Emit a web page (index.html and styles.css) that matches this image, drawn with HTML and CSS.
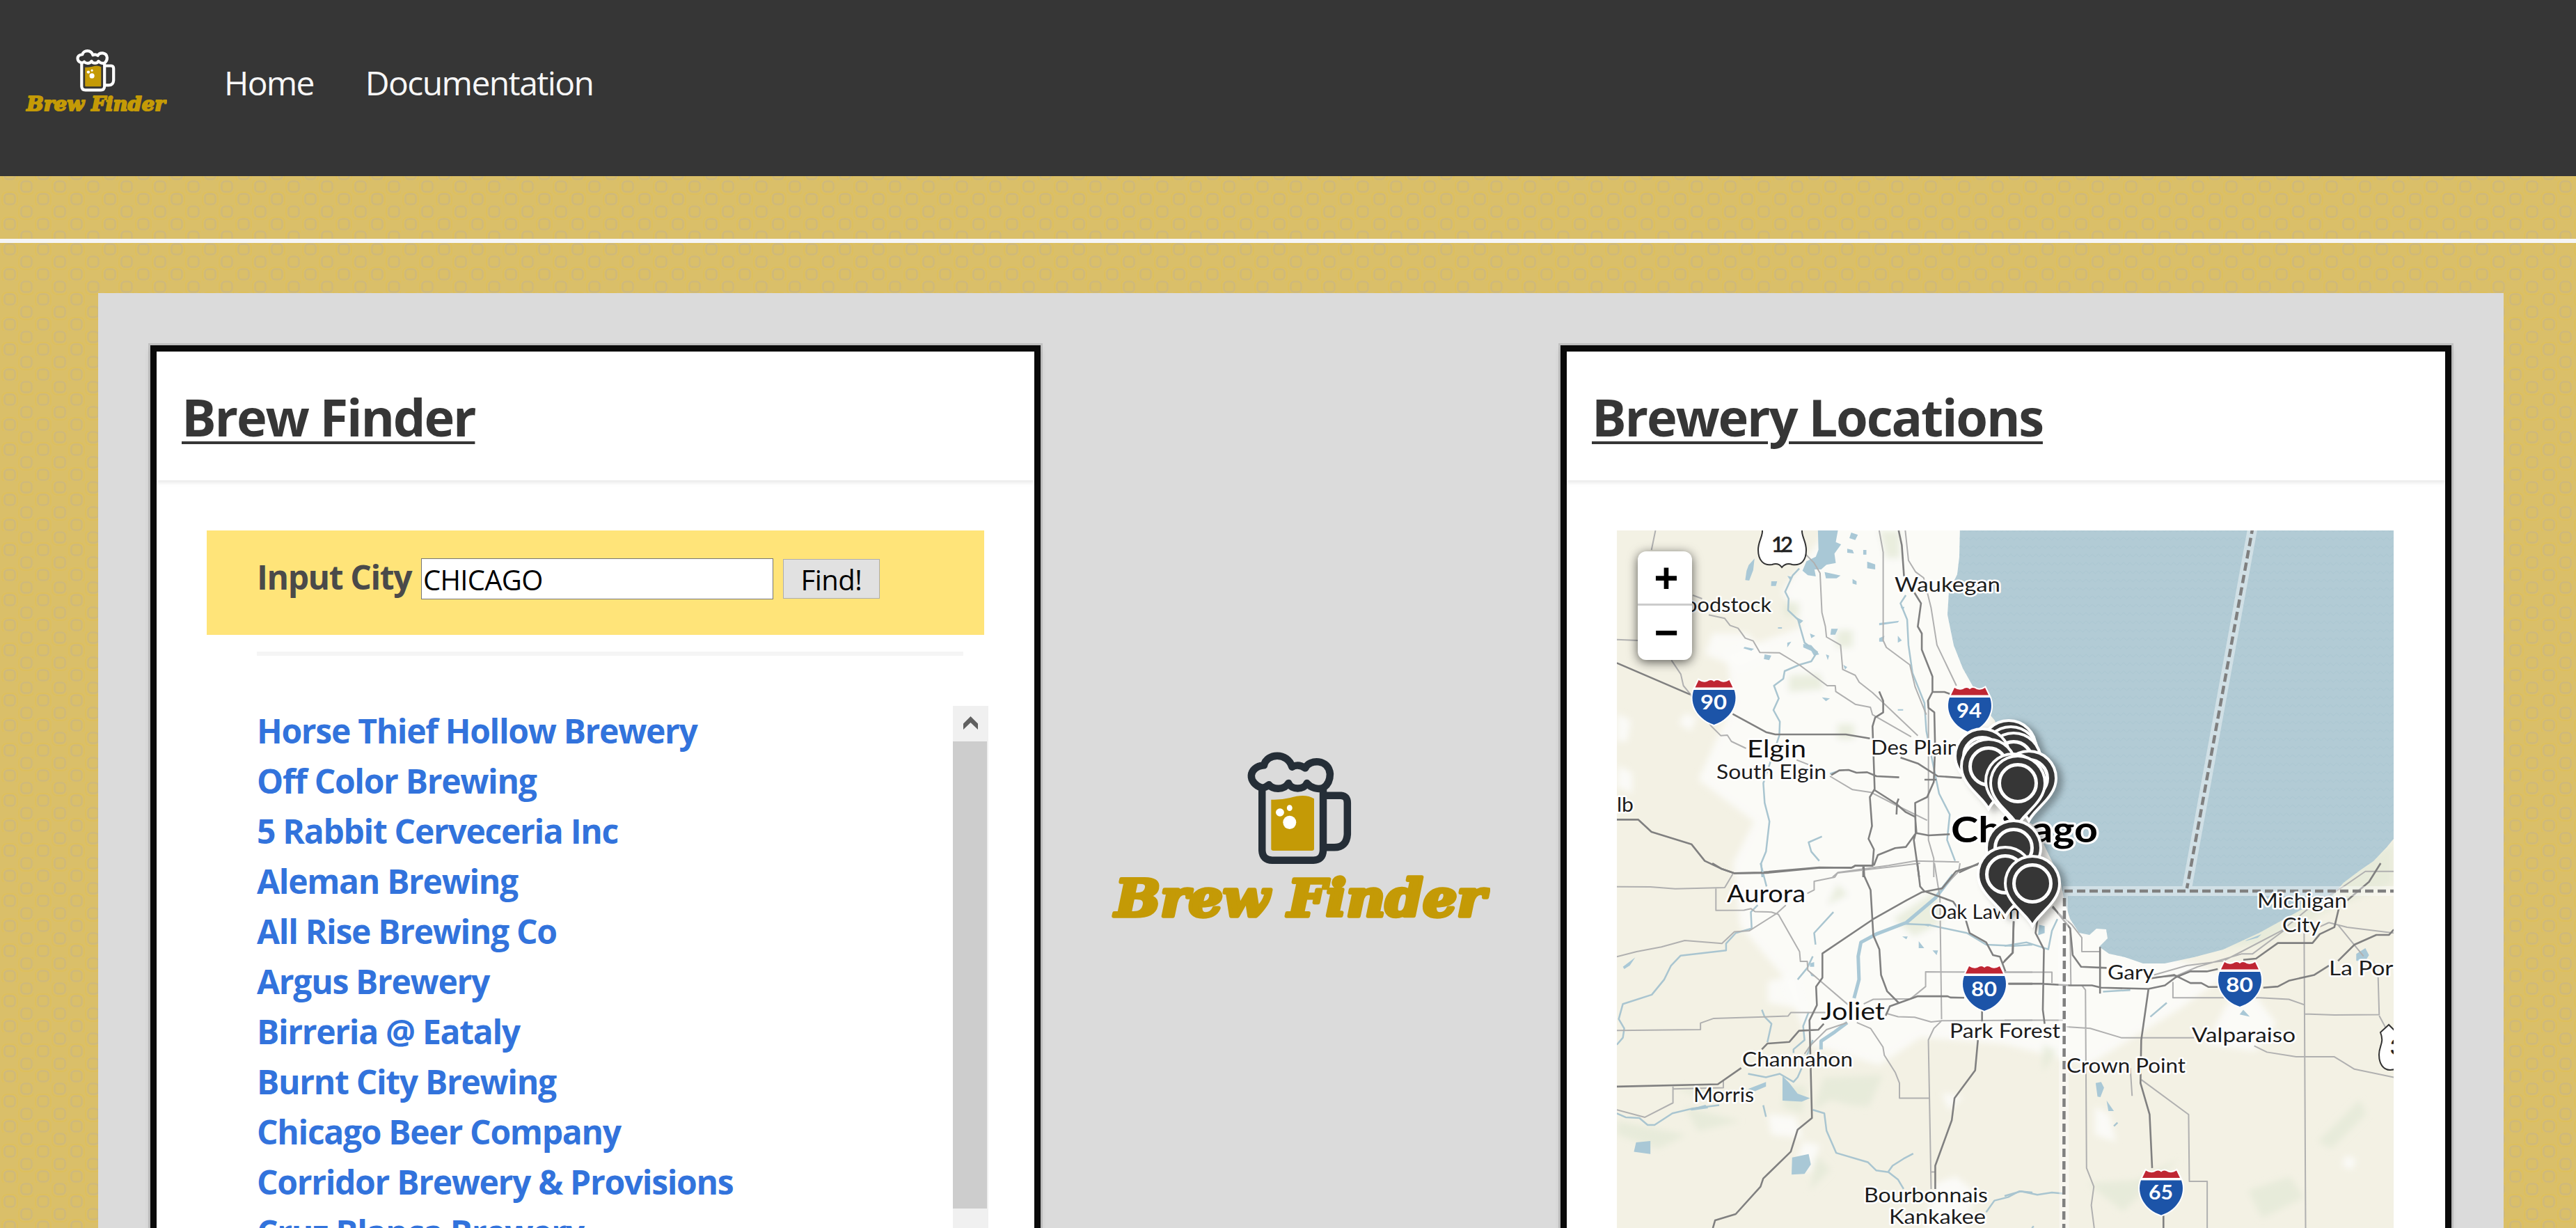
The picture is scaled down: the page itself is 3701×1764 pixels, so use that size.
FILE: index.html
```
<!DOCTYPE html>
<html lang="en">
<head>
<meta charset="utf-8">
<title>Brew Finder</title>
<link rel="stylesheet" href="styles.css">
</head>
<body>
<svg class="defs" aria-hidden="true">
  <defs>
    <symbol id="logo" viewBox="1597 1080 545 243">
      <g transform="translate(1560 1040) scale(.39541 .33333)">
        <path class="logo-line" d="M642 275C590 255 590 185 650 178C660 125 735 120 752 185Q775 170 800 190C815 150 885 150 890 215Q890 255 866 275C845 285 820 275 806 255C795 285 750 285 739 255C720 290 680 280 668 262Q655 275 642 275ZM643 275V545Q645 587 680 587H830Q863 587 865 545V275M870 308H930Q953 310 953 340V475Q950 532 905 532H870"/>
        <path class="logo-fill" d="M676 326Q710 328 745 318Q800 298 832 322V538Q832 546 824 546H684Q676 546 676 538Z"/>
        <ellipse class="logo-foam" cx="708" cy="381" rx="15" ry="17"/>
        <ellipse class="logo-foam" cx="743" cy="362" rx="10" ry="13"/>
        <ellipse class="logo-foam" cx="743" cy="424" rx="24" ry="29"/>
      </g>
      <text class="logo-text" x="1603" y="1316" textLength="532" lengthAdjust="spacingAndGlyphs">Brew Finder</text>
    </symbol>
    <symbol id="shield" viewBox="-36 -4 72 76" overflow="visible">
      <path class="sh-edge" d="M-22 2Q-16 6-10 4Q-4 0 0 4Q4 0 10 4Q16 6 22 2L29 16C36 36 24 58 0 66C-24 58-36 36-29 16Z"/>
      <path class="sh-red" d="M-22 2Q-16 6-10 4Q-4 0 0 4Q4 0 10 4Q16 6 22 2L27 12.500H-27Z"/>
      <path class="sh-blue" d="M-29 16H29C36 36 24 58 0 66C-24 58-36 36-29 16Z"/>
    </symbol>
    <g id="pin">
      <path class="pin-body" d="M0 57C-10 40-37 25-37 0A37 37 0 0 1 37 0C37 25 10 40 0 57Z"/>
      <circle class="pin-ring" r="26.500"/>
    </g>
    <pattern id="waves" width="18" height="24" patternUnits="userSpaceOnUse">
      <path class="wave" d="M0 4L4.500 8L9 4L13.500 8L18 4M0 16L4.500 20L9 16L13.500 20L18 16"/>
    </pattern>
    <filter id="soft" x="-10%" y="-10%" width="120%" height="120%"><feGaussianBlur stdDeviation="5"/></filter>
  </defs>
</svg>

<nav class="navbar">
  <svg class="nav-logo"><use href="#logo"/></svg>
  <a class="nav-home">Home</a>
  <a class="nav-docs">Documentation</a>
</nav>
<div class="rule-band"></div>

<main class="container">
  <section class="card card-finder">
    <header class="card-head"><h1>Brew Finder</h1></header>
    <div class="card-body">
      <form class="search">
        <label>Input City</label>
        <div class="field">CHICAGO</div>
        <div class="find">Find!</div>
      </form>
      <div class="divider"></div>
      <div class="results">
        <ul>
          <li>Horse Thief Hollow Brewery</li>
          <li>Off Color Brewing</li>
          <li>5 Rabbit Cerveceria Inc</li>
          <li>Aleman Brewing</li>
          <li>All Rise Brewing Co</li>
          <li>Argus Brewery</li>
          <li>Birreria @ Eataly</li>
          <li>Burnt City Brewing</li>
          <li>Chicago Beer Company</li>
          <li>Corridor Brewery &amp; Provisions</li>
          <li>Cruz Blanca Brewery</li>
        </ul>
        <div class="scrollbar">
          <svg class="up" viewBox="0 0 21 19"><path d="M10.500 0L21 10.500V19L10.500 9L0 19V10.500Z"/></svg>
          <div class="thumb"></div>
        </div>
      </div>
    </div>
  </section>

  <div class="middle"><svg class="big-logo"><use href="#logo"/></svg></div>

  <section class="card">
    <header class="card-head"><h1>Brewery Locations</h1></header>
    <div class="card-body">
      <div class="map">
        <svg class="map-art" viewBox="2323 762 1116 1080">
          <g filter="url(#soft)">
            <path class="urban" d="M2640 740L2830 740L2860 1040L2980 1300L3130 1380L3200 1400L3130 1450L3000 1530L2880 1500L2760 1490L2700 1530L2600 1500L2560 1400L2500 1330L2490 1240L2520 1180L2440 1120L2490 1010L2480 940L2590 900L2560 850Z"/>
            <path class="urban" d="M2460 910h50l30 30-40 20-50-20zM2323 1025l20 10-5 30-15 0zM2325 1100l20 10v30l-22-10zM2420 1025l18 5-8 20-18-10zM2540 1410l40-10 10 50-50-10zM2540 1600l40 5 10 30-45-5zM2590 1640l25 5-15 40-20-10zM2780 1700l30-10 25 20-10 60h-60zM3200 1440l40-10 30 40-30 40-70-10zM2790 1570l30 5-20 20zM3010 1590l20 10 10 40-30-10zM3370 1660l15 5-5 15-15-5z"/>
            <path class="park" d="M2620 1548L2705 1544L2685 1590L2660 1588L2630 1580L2605 1595ZM2565 1560h30l-5 40-30-10zM2720 1320l60-40 10 45-40 20zM2563 865h22v20h-22zM2640 905h22v25h-25zM2570 970l45-2 5 22-50 4zM2640 1040h24v22h-24zM3190 1364L3370 1255L3439 1210V1270L3360 1300L3250 1355ZM2935 1500l20 10-20 30zM2323 1610l100 20-40 20-60-20zM2420 1590l80 20-60 15zM3000 1700l70-5 60-30-80 75zM3230 1710l60-20 20 30-60 30zM3330 1640l60-60 10 20-50 50z"/>
            <path class="park" d="M2700 762h30v40h-20zM2640 1270l15 15-30 15zM2610 1660l20 20-30 30zM2400 1560l60 5-20 10z"/>
          </g>

          <path class="lake" d="M2816 755L2815 800L2812 825L2800 850L2798 883L2807 927L2820 960L2834 985L2851 1017L2866 1035L2885 1090L2900 1160L2935 1210L2960 1262L2965 1290L2974 1320L2987 1340L3002 1343L3012 1334L3026 1335L3028 1348L3016 1360L3030 1370L3053 1375L3079 1384L3110 1384L3152 1375L3194 1364L3246 1340L3304 1308L3351 1287L3367 1268L3391 1250L3410 1237L3429 1217L3439 1205V755Z"/>
          <path class="lake-waves" d="M2816 755L2815 800L2812 825L2800 850L2798 883L2807 927L2820 960L2834 985L2851 1017L2866 1035L2885 1090L2900 1160L2935 1210L2960 1262L2965 1290L2974 1320L2987 1340L3002 1343L3012 1334L3026 1335L3028 1348L3016 1360L3030 1370L3053 1375L3079 1384L3110 1384L3152 1375L3194 1364L3246 1340L3304 1308L3351 1287L3367 1268L3391 1250L3410 1237L3429 1217L3439 1205V755Z"/>

          <!-- north-west quarter -->
          <g transform="translate(2300 740) scale(.38265 .33333)">
            <path class="pond" d="M815 66h75l-8 50 20 10-25 40 5 40-35 8-20 20-25 0 5 30-30-5-20-20 15-40 35-20 10-30zM555 215l22-28-5 50-15 45-15-2 5-40zM640 285h22l-5 20-18 0zM700 262l20 5-10 12zM840 245l60 15-15 12-40 0zM925 145l20 5 5 15-25-3zM985 150h12v20h-12zM1000 200l30 12v22l-30-5zM940 75l25 10-10 22-22-8zM945 275l15 10 0 15-15-5zM735 440l25 15-15 15zM785 510l20 10-15 10zM865 490l25 0-10 25-18 0zM1045 465l75-10-5 8-70 12zM1045 530l20-10-5 25-15 0zM540 568l35 8-10 8-30-10zM615 600l25 5-8 20-20-5zM845 600l12 5-5 20zM910 645l15 10-8 10zM830 785l30 5-15 12zM1115 520l15 20-15 10zM1125 395l15 0-5 15zM760 555l30 5 30 40-20 5-10-20-30-15zM665 483h15v6h-15zM1115 836h20v6h-20zM700 550l15-5-15 25z"/>
            <path class="river" d="M745 230L720 260L692 330L705 360L703 410L740 450L765 550L812 590L790 630L745 645L690 672L685 705L650 735L668 790L648 840L672 890L670 950L610 1155L615 1240L633 1320L620 1450L602 1500L606 1560M1145 345L1125 380L1150 450L1155 560L1170 680L1215 810L1222 930L1250 1090L1270 1200L1310 1290L1300 1400L1330 1490M860 1115L885 1105M820 1490L790 1450L780 1410L830 1385"/>
            <path class="road" d="M205 66L190 150M60 536L140 540M265 625L300 685L310 735L335 770L415 910L450 950L475 948L490 975L545 1005M345 345L380 360M405 430L465 445L485 475L515 487L542 530L572 542L597 592L670 593L745 645L850 735H880L882 760L955 815L1012 828L1020 860L1165 955M770 170L800 205L823 250L830 420L843 480L847 525L900 560L908 665L955 690L970 720L1020 765L1190 950M1045 66L1060 160L1060 540L1072 570L1160 645L1180 740L1222 860M1143 66L1155 195L1182 245L1212 270L1240 400L1262 560L1335 735M1230 800L1230 1400L1250 1480V1560M860 1125L945 1183L1015 1195L1100 1245L1225 1315M735 1055L780 1075M870 1560L890 1540L1080 1510L1180 1490L1345 1495"/>
            <path class="hwy" d="M60 637L335 773M495 857L620 935L655 945H920L1010 962M1118 66L1130 130L1138 260L1175 330L1202 380L1190 480L1205 510V580L1245 695V762H1290L1310 770M1245 762L1228 800L1230 830L1252 850L1255 1000L1250 1150L1225 1215L1180 1240L1182 1370L1175 1400L1195 1560M1045 760L1060 800V850L1030 872L1020 910L1028 1180L1010 1215L1018 1340L1005 1395L1025 1440L1020 1510H955L940 1520L820 1518L600 1540L500 1543L455 1525L390 1490L340 1418L190 1365L140 1312H60M865 1120L895 1100L930 1098L960 1110L1000 1108L1035 1125L1120 1130M1028 1185L1110 1245L1145 1280L1180 1300L1185 1370L1230 1380L1310 1375M1025 1510L1040 1465L1105 1435L1145 1430L1180 1375M1110 1290L1112 1240L1118 1222M1125 1045L1190 1070L1265 1125L1355 1132M1345 1540L1420 1500M985 1515V1560M1215 1140H1260"/>
          </g>

          <!-- south-west quarter -->
          <g transform="translate(2300 1240) scale(.39541 .33422)">
            <path class="pond" d="M128 1200L180 1194V1250L120 1240ZM695 1265L755 1250L763 1295L740 1335L693 1338ZM535 970L600 940 600 960 560 980ZM660 915l25 30 30 45 45 20-30 15-70-5zM320 1058l60-20 10 15-60 10zM80 445l45-40-20 35-20 15zM1155 335l20 30-20 0zM1095 315l20 0-5 12zM1205 375l20 0-5 20zM760 430l15-5v20h-15zM1165 262h35l-10 10zM755 460l30 30-20-5z"/>
            <path class="river" d="M580 0L602 100M570 180L545 210L548 280L490 300L455 345V375L290 397L255 440L230 500L185 565L80 605L65 670L85 710L80 750L58 780M58 1075L90 1092L140 1095L170 1125H195L260 1075L330 1055L430 1040M535 905L600 920L650 905L700 940L715 920L730 880M770 1060L812 1075L820 1150L855 1245L970 1285L1000 1320L1045 1328L1080 1360L1100 1400M1400 1500L1430 1450L1480 1435L1520 1410L1568 1415M845 210L775 300L780 350M735 870L770 760M585 630L595 660L620 690L605 770M755 640L735 700L740 760L700 800V815M590 1040L600 1090M770 400L750 450L715 500M1100 260L1190 265L1330 300L1400 350L1500 355L1568 350M1045 1325L1060 1300L1100 1270L1135 1248"/>
            <path class="river-wide" d="M1280 50L1215 150L1110 255L1000 305L945 340L935 400L938 500L920 580M895 685L850 725L800 765L800 800"/>
            <path class="road" d="M58 101L180 102L270 110L450 105L480 45M418 108V203L520 202L545 195L560 208L620 210L645 220L722 380L725 422H750L752 460L900 610M672 180L640 215L540 290L485 295L440 345L305 332L220 360L130 380L58 402M750 130L775 115V78L850 60L860 42L1060 15L1160 0M58 719L362 715V687L410 667L680 657L690 642H820M740 820L760 785L820 715L895 685M930 685L980 710L1025 790L1030 825L1070 900L1085 945V1010H1192M262 960V1030L160 1092L58 1060M262 970L445 965V935M955 605L990 585L1125 583L1180 530V467L1568 468M1212 0L1232 150L1238 670M1240 675L1210 710L1190 760L1200 1400M1568 675L1240 677L1200 682L1140 662L1080 660L1035 645M1200 1327H1215M1235 115L1300 35L1305 0"/>
            <path class="hwy" d="M405 0L440 25L485 43L600 42L790 20L915 18L925 10H990M955 15L957 55L980 115L990 310L1012 370L1018 480L1040 550L1082 600M1370 5L1290 35L1240 108L1165 125L1110 160L990 240L805 388V492L782 530L785 610L758 675L767 1095L715 1145L690 1240L590 1355L580 1390L490 1508L415 1535L407 1568M1150 0L1160 100L1175 120L1280 165L1325 240L1340 300L1400 340L1425 395L1450 402L1470 465M1320 578L1270 577L1260 572H1150L1050 615L1035 655M810 690L790 716L720 720L685 768L605 775L585 800M510 880L425 950L58 960M1385 635V680M1370 760L1360 890L1285 1010L1275 1105L1215 1300V1400M1500 250L1497 385L1460 430M1480 518H1568"/>
          </g>

          <!-- south-east quarter -->
          <g transform="translate(2880 1240) scale(.52360 .33422)">
            <path class="pond" d="M250 945l15-5 8 25-10 40-8-2zM280 1020l20 45-15 0zM655 630l18 30-28-10zM965 390l25-25 10 30-10 25-25 0zM665 330l40-25-10 15-35 15zM95 265l15 5 0 30-18 10z"/>
            <path class="river" d="M0 355L60 340L120 370L130 290L145 240M300 1130L310 1115M400 660L445 600M0 1430L45 1410L90 1425L130 1415L160 1420M270 552L345 545M75 1568L80 1560"/>
            <path class="road" d="M130 190L185 265L212 320V380H262M180 285L182 525M212 525L222 545L225 1310L245 1390L238 1470L246 1568M170 703L235 710L320 750H520M462 510V578H700L780 585L822 608M822 300L826 1568M824 648L905 652L1028 651L1025 490M1028 655L1045 705M685 785L720 812L800 832H905L960 885L1068 920M375 930L505 1080L507 1367H556V1568M0 468H130V515M410 480L500 440L600 420L650 380L760 290L830 200L930 100L990 35H1068M890 255L940 275L1068 300M890 255L855 280M915 265L985 400M350 1000L345 880M0 675H160M415 490L470 485L530 445L650 390L680 390L770 285"/>
            <path class="hwy" d="M90 245L85 300L108 370L105 630L110 690M132 185L180 280L187 395L210 445L280 450M12 518H100L180 525H240L265 535L395 540L440 525L470 490L510 465H555L585 455M395 540L375 760L373 945L398 1080L405 1310M400 495L465 480L510 515L540 515L560 532H585M710 535L750 530L780 505L850 480L890 440M655 415L690 410L750 343H845L865 305L905 275L917 195M940 160L1000 80L1032 0M915 420L960 350L1020 308H1055L1068 285M262 360V560M436 1515V1568M0 420L22 385L25 250"/>
          </g>

          <g>
            <path class="state-halo" d="M3237 755L3142 1276M2964 1280H3445M2964 1280L2966 1850"/>
            <path class="state" d="M3237 755L3142 1276M2966 1280H3445M2966 1290L2965 1850"/>
          </g>

          <path class="us" d="M2531 755C2535 770 2526 775 2526 790C2526 805 2534 813 2546 811Q2555 808 2560 815Q2566 808 2575 811C2588 813 2595 805 2595 790C2595 775 2586 770 2590 755Z"/>
          <path class="us" d="M3432 1472L3420 1483C3426 1498 3418 1502 3418 1515C3418 1528 3424 1537 3434 1537L3450 1535V1490Z"/>
          <use href="#shield" x="2426.500" y="971" width="72" height="76"/>
          <use href="#shield" x="2794" y="982" width="72" height="76"/>
          <use href="#shield" x="2815" y="1382" width="72" height="76"/>
          <use href="#shield" x="3182" y="1376" width="72" height="76"/>
          <use href="#shield" x="3069" y="1675.500" width="72" height="76"/>

          <g class="num">
            <text x="2443" y="1019" textLength="38" lengthAdjust="spacingAndGlyphs">90</text>
            <text x="2811" y="1031" textLength="36" lengthAdjust="spacingAndGlyphs">94</text>
            <text x="2832" y="1430.500" textLength="37" lengthAdjust="spacingAndGlyphs">80</text>
            <text x="3198" y="1424.500" textLength="39" lengthAdjust="spacingAndGlyphs">80</text>
            <text x="3087" y="1723" textLength="35" lengthAdjust="spacingAndGlyphs">65</text>
          </g>
          <text class="us-num" x="2545" y="793" textLength="31">12</text>
          <text class="us-num" x="3434" y="1515">3</text>

          <g class="town">
            <text x="2722" y="850" textLength="152" lengthAdjust="spacingAndGlyphs">Waukegan</text>
            <text x="2391" y="879" textLength="154" lengthAdjust="spacingAndGlyphs">Woodstock</text>
            <text x="2466" y="1119" textLength="158" lengthAdjust="spacingAndGlyphs">South Elgin</text>
            <text x="2688" y="1084" textLength="157" lengthAdjust="spacingAndGlyphs">Des Plaines</text>
            <text x="2250" y="1166" textLength="97" lengthAdjust="spacingAndGlyphs">DeKalb</text>
            <text x="2774" y="1319.500" textLength="128" lengthAdjust="spacingAndGlyphs">Oak Lawn</text>
            <text x="2801" y="1491" textLength="159" lengthAdjust="spacingAndGlyphs">Park Forest</text>
            <text x="2503" y="1532" textLength="159" lengthAdjust="spacingAndGlyphs">Channahon</text>
            <text x="2433" y="1583" textLength="87" lengthAdjust="spacingAndGlyphs">Morris</text>
            <text x="2678" y="1727" textLength="178" lengthAdjust="spacingAndGlyphs">Bourbonnais</text>
            <text x="2714" y="1758" textLength="139" lengthAdjust="spacingAndGlyphs">Kankakee</text>
            <text x="3243" y="1304" textLength="129" lengthAdjust="spacingAndGlyphs">Michigan</text>
            <text x="3279" y="1339" textLength="55" lengthAdjust="spacingAndGlyphs">City</text>
            <text x="3346" y="1401" textLength="122" lengthAdjust="spacingAndGlyphs">La Porte</text>
            <text x="3028" y="1407" textLength="67" lengthAdjust="spacingAndGlyphs">Gary</text>
            <text x="3149" y="1497" textLength="149" lengthAdjust="spacingAndGlyphs">Valparaiso</text>
            <text x="2969" y="1541" textLength="171" lengthAdjust="spacingAndGlyphs">Crown Point</text>
          </g>
          <g class="city">
            <text x="2510" y="1088" textLength="85" lengthAdjust="spacingAndGlyphs">Elgin</text>
            <text x="2481" y="1295.500" textLength="113" lengthAdjust="spacingAndGlyphs">Aurora</text>
            <text x="2616" y="1464.500" textLength="92" lengthAdjust="spacingAndGlyphs">Joliet</text>
          </g>
          <text class="metro" x="2803" y="1210" textLength="211" lengthAdjust="spacingAndGlyphs">Chicago</text>

          <g class="pins">
            <use href="#pin" x="2886" y="1074"/>
            <use href="#pin" x="2889" y="1083"/>
            <use href="#pin" x="2893" y="1092"/>
            <use href="#pin" x="2848" y="1086"/>
            <use href="#pin" x="2857" y="1101"/>
            <use href="#pin" x="2915" y="1118"/>
            <use href="#pin" x="2892" y="1122"/>
            <use href="#pin" x="2899" y="1125"/>
            <use href="#pin" x="2893" y="1218"/>
            <use href="#pin" x="2881" y="1256"/>
            <use href="#pin" x="2920" y="1269"/>
          </g>
        </svg>
        <div class="zoom"><span>+</span><span>−</span></div>
      </div>
    </div>
  </section>
</main>
</body>
</html>
```
FILE: styles.css
```
* { box-sizing: border-box; }
html, body { margin: 0; height: 1764px; overflow: hidden; }
body {
  font-family: "Open Sans", "Noto Sans", sans-serif;
  font-size: 48px;
  background-color: #dabf69;
  background-image: url("data:image/svg+xml,%3Csvg xmlns='http://www.w3.org/2000/svg' width='48' height='36'%3E%3Cg fill='none' stroke-width='2'%3E%3Cg stroke='%23dfbf58' opacity='.7'%3E%3Crect x='3' y='17' width='22' height='21' rx='7'/%3E%3Crect x='27' y='-1' width='22' height='21' rx='7'/%3E%3C/g%3E%3Cg stroke='%23cfb97a' stroke-width='2.5'%3E%3Crect x='6.500' y='19.500' width='15' height='15' rx='5'/%3E%3Crect x='30.500' y='1.500' width='15' height='15' rx='5'/%3E%3C/g%3E%3C/g%3E%3C/svg%3E");
  background-position: 0 7px;
  display: flex;
  flex-direction: column;
}
h1, ul { margin: 0; padding: 0; }
.defs { position: absolute; width: 0; height: 0; }

.navbar { flex: none; height: 253px; background: #363636; color: #f7f7f7; display: flex; align-items: flex-start; padding-left: 36px; }
.nav-logo { width: 204px; height: 91px; margin-top: 71px; --line: #fff; --line-w: 4.2px; }
.navbar a { line-height: 72px; margin-top: 83px; }
.nav-home { margin-left: 82px; letter-spacing: -1.7px; }
.nav-docs { margin-left: 74px; letter-spacing: -1.6px; }
.rule-band { flex: none; height: 6px; margin: 90px 0 72px; background: #f5f5f5; }

.container { flex: none; margin: 0 104px 0 141px; height: 1343px; padding: 75px 75px 0; background: #dbdbdb; display: flex; overflow: hidden; }
.card { flex: none; width: 1280px; height: 1400px; border: 9px solid #0a0a0a; background: #fff; box-shadow: 0 0 0 3px rgba(10,10,10,.12), 0 6px 9px rgba(10,10,10,.1); }
.card-finder { width: 1279px; }
.card-head { height: 185px; padding: 40px 0 0 36px; box-shadow: 0 3px 6px rgba(10,10,10,.1); }
.card-head h1 { font-size: 74px; line-height: 108px; font-weight: 700; color: #363636; letter-spacing: -2.2px; width: max-content; text-decoration: underline; text-decoration-thickness: 4px; text-underline-offset: 7px; }
.card-body { padding: 72px; }
.middle { flex: 1; display: flex; justify-content: center; }
.big-logo { width: 545px; height: 243px; margin-top: 584px; --line: #252e37; --line-w: 10.5px; }
.logo-line { fill: none; stroke: var(--line); stroke-width: var(--line-w); vector-effect: non-scaling-stroke; stroke-linejoin: round; }
.logo-fill { fill: #c49a06; }
.logo-foam { fill: #fff; }
.logo-text { font: italic 700 73px "DejaVu Serif", serif; fill: #c49a06; stroke: #c49a06; stroke-width: 5.5; stroke-linejoin: round; }

.search { height: 150px; padding-left: 72px; background: #ffe479; color: #4a4a4a; display: flex; align-items: flex-start; }
.search label { width: 236px; font-weight: 700; line-height: 72px; margin-top: 31px; letter-spacing: -1.4px; white-space: nowrap; }
.field { width: 506px; height: 59px; margin-top: 40px; padding-left: 2px; border: 1px solid #767676; background: #fff; color: #000; font-size: 40px; line-height: 60px; letter-spacing: -.7px; }
.find { width: 139px; height: 57px; margin: 41px 0 0 14px; border: 1px solid #adadad; background: #e1e1e1; color: #000; font-size: 40px; line-height: 58px; text-align: center; letter-spacing: -.5px; }
.divider { height: 6px; margin: 24px 30px 72px 72px; background: #f5f5f5; }
.results { margin: 0 -6px 0 72px; display: flex; }
.results ul { flex: 1; list-style: none; }
.results li { height: 72px; line-height: 72px; font-weight: 700; color: #3273dc; letter-spacing: -1.3px; white-space: nowrap; }
.scrollbar { width: 51px; height: 830px; background: #f0f0f0; padding-top: 15px; }
.up { display: block; width: 21px; height: 19px; margin: 0 auto 17px; fill: #606060; }
.thumb { width: 49px; height: 671px; background: #cdcdcd; }

.map { position: relative; width: 1116px; height: 1080px; background: #f3f1e4; overflow: hidden; }
.map-art { display: block; width: 1116px; height: 1080px; }
.zoom { position: absolute; left: 30px; top: 30px; width: 78px; height: 156px; border-radius: 12px; background: #fff; box-shadow: 0 3px 15px rgba(0,0,0,.65); display: flex; flex-direction: column; }
.zoom span { height: 75px; text-align: center; font-size: 62px; font-weight: 700; line-height: 74px; padding-left: 4px; color: #000; }
.zoom span + span { height: 81px; border-top: 3px solid #ccc; }
.urban { fill: #fcfcfa; opacity: .9; }
.park { fill: #e5ead8; opacity: .8; }
.lake { fill: #b2cbd5; }
.lake-waves { fill: url(#waves); }
.wave { fill: none; stroke: #a9c5d1; stroke-width: 1.5; opacity: .45; }
.pond { fill: #a9c8d6; }
.river, .river-wide, .road, .hwy { fill: none; vector-effect: non-scaling-stroke; stroke-linejoin: round; }
.river { stroke: #a9c5d0; stroke-width: 2.5; }
.river-wide { stroke: #a9c8d6; stroke-width: 5; }
.road { stroke: #b0b0b0; stroke-width: 2; }
.hwy { stroke: #808080; stroke-width: 2.6; }
.state-halo { fill: none; stroke: #fff; stroke-width: 14; opacity: .4; }
.state { fill: none; stroke: #808080; stroke-width: 4.500; stroke-dasharray: 12 6; }
.us { fill: #fff; stroke: #333; stroke-width: 2; }
.sh-edge { fill: #fff; stroke: #fff; stroke-width: 4; }
.sh-red { fill: #bf2633; }
.sh-blue { fill: #1c54a8; }
.num { font: 700 28px Lato, sans-serif; fill: #fff; }
.us-num { font: 500 31px Lato, sans-serif; fill: #222; stroke: #222; stroke-width: .6; }
.town, .city, .metro { stroke: #fff; paint-order: stroke; stroke-linejoin: round; }
.town { font: 400 29px Lato, sans-serif; fill: #1c1c1c; stroke-width: 5; }
.city { font: 400 35px Lato, sans-serif; fill: #111; stroke-width: 5; }
.metro { font: 700 52px Lato, sans-serif; fill: #000; stroke-width: 6; }
.pins { filter: drop-shadow(8px 4px 5px rgba(0,0,0,.3)); }
.pin-body { fill: #363636; stroke: #fff; stroke-width: 8; paint-order: stroke; }
.pin-ring { fill: none; stroke: #fff; stroke-width: 5; }
```
